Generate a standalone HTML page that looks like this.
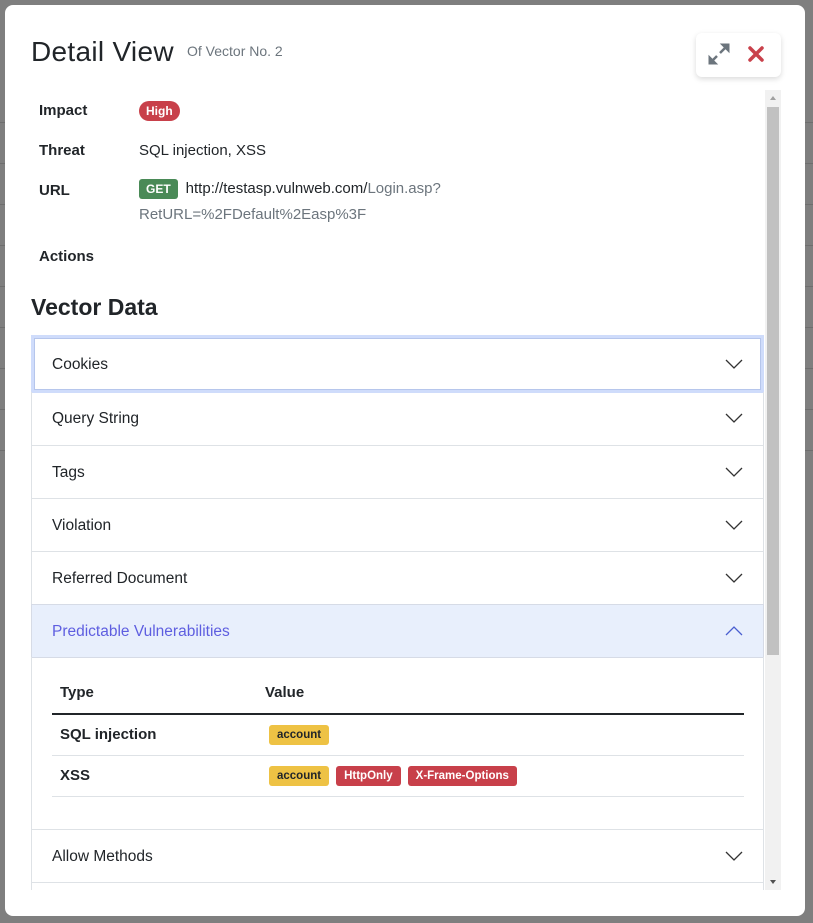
<!DOCTYPE html>
<html><head><meta charset="utf-8"><style>
*{box-sizing:border-box;margin:0;padding:0}
body{width:813px;height:923px;background:#7f7f7f;font-family:"Liberation Sans",sans-serif;position:relative;overflow:hidden;color:#212529}
.bgl{position:absolute;left:0;width:813px;height:1px;background:#6e6e6e}
.modal{position:absolute;left:5px;top:5px;width:800px;height:911px;background:#fff;border-radius:8px}
.title{position:absolute;left:26px;top:31px;font-size:28px;color:#212529;letter-spacing:0.3px}
.sub{position:absolute;left:182px;top:38px;font-size:14px;color:#6c757d}
.btns{position:absolute;left:691px;top:28px;width:85px;height:44px;background:#fff;border-radius:6px;box-shadow:0 2px 6px rgba(0,0,0,.15)}
.scroll{position:absolute;left:26px;top:85px;width:750px;height:800px;overflow:hidden}
.sb{position:absolute;left:734px;top:0;width:16px;height:800px;background:#f1f1f1}
.thumb{position:absolute;left:2px;top:17px;width:12px;height:548px;background:#c1c1c1}
.lbl{position:absolute;left:8px;font-weight:bold;font-size:15px}
.val{position:absolute;left:108px;font-size:15px}
.badge{display:inline-block;color:#fff;font-weight:bold;font-size:12px;padding:3px 7px;border-radius:10px;line-height:14px;vertical-align:middle}
.acc{position:absolute;left:0;width:733px;border:1px solid #dee2e6;font-size:15.5px;color:#212529}
.acc .t{position:absolute;left:20px;top:18px}
.chev{position:absolute;right:20px;top:21px}
.tag{display:inline-block;font-weight:bold;font-size:11.5px;padding:3px 8px;line-height:14px;border-radius:3px;margin-right:7px}
</style></head><body>
<div class="bgl" style="top:122px"></div><div class="bgl" style="top:163px"></div><div class="bgl" style="top:204px"></div><div class="bgl" style="top:245px"></div><div class="bgl" style="top:286px"></div><div class="bgl" style="top:327px"></div><div class="bgl" style="top:368px"></div><div class="bgl" style="top:409px"></div><div class="bgl" style="top:450px"></div>
<div class="modal">
<div class="title">Detail View</div>
<div class="sub">Of Vector No. 2</div>
<div class="btns">
<svg width="85" height="44" viewBox="0 0 85 44"><g stroke="#6c757d" stroke-width="2.5" fill="#6c757d"><line x1="16" y1="28" x2="21" y2="23"/><line x1="24" y1="20" x2="29" y2="15"/><path d="M25 11h8v8z" stroke-width="1"/><path d="M13 23v8h8z" stroke-width="1"/></g><g stroke="#c9414b" stroke-width="3.5" stroke-linecap="round"><line x1="54" y1="15" x2="66" y2="27"/><line x1="66" y1="15" x2="54" y2="27"/></g></svg>
</div>
<div class="scroll">
<div class="sb"><div class="thumb"></div><div style="position:absolute;left:5px;top:6px;border:3px solid transparent;border-bottom:4px solid #a0a0a0;border-top:0"></div><div style="position:absolute;left:5px;top:790px;border:3px solid transparent;border-top:4px solid #505050;border-bottom:0"></div></div>
<div class="lbl" style="top:12px">Impact</div><div class="val" style="top:11px"><span class="badge" style="background:#c8404a">High</span></div>
<div class="lbl" style="top:52px">Threat</div><div class="val" style="top:52px">SQL injection, XSS</div>
<div class="lbl" style="top:92px">URL</div><div class="val" style="top:86px;line-height:26px;color:#6c757d;width:400px"><span class="badge" style="background:#4a8a57;border-radius:3px;margin-right:8px">GET</span><span style="color:#212529">http://testasp.vulnweb.com/</span>Login.asp?<br>RetURL=%2FDefault%2Easp%3F</div>
<div class="lbl" style="top:158px">Actions</div>
<div style="position:absolute;left:0;top:204px;font-size:23px;font-weight:bold">Vector Data</div>
<div class="acc" style="top:245px;height:58px;border:3px solid #cfdcfb;background:#fff;box-shadow:inset 0 0 0 1px #b6c6ec"><span class="t" style="top:18px;left:18px">Cookies</span><svg class="chev" style="top:21px;right:18px" width="18" height="10"><path d="M1 1l8 8 8-8" fill="none" stroke="#333" stroke-width="1.3"/></svg></div>
<div class="acc" style="top:302px;height:54px;border-top:0"><span class="t">Query String</span><svg class="chev" width="18" height="10"><path d="M1 1l8 8 8-8" fill="none" stroke="#333" stroke-width="1.3"/></svg></div>
<div class="acc" style="top:355px;height:54px"><span class="t">Tags</span><svg class="chev" width="18" height="10"><path d="M1 1l8 8 8-8" fill="none" stroke="#333" stroke-width="1.3"/></svg></div>
<div class="acc" style="top:408px;height:54px"><span class="t">Violation</span><svg class="chev" width="18" height="10"><path d="M1 1l8 8 8-8" fill="none" stroke="#333" stroke-width="1.3"/></svg></div>
<div class="acc" style="top:461px;height:54px"><span class="t">Referred Document</span><svg class="chev" width="18" height="10"><path d="M1 1l8 8 8-8" fill="none" stroke="#333" stroke-width="1.3"/></svg></div>
<div class="acc" style="top:514px;height:54px;background:#e8effc;border-color:#d6dbe6;color:#5e5ee0"><span class="t">Predictable Vulnerabilities</span><svg class="chev" width="18" height="10"><path d="M1 9l8-8 8 8" fill="none" stroke="#4a5fd0" stroke-width="1.3"/></svg></div>
<div class="acc" style="top:567px;height:173px;border-top:0">
<div style="position:absolute;left:28px;top:27px;font-weight:bold;font-size:15px">Type</div>
<div style="position:absolute;left:233px;top:27px;font-weight:bold;font-size:15px">Value</div>
<div style="position:absolute;left:20px;top:56px;width:692px;height:2px;background:#212529"></div>
<div style="position:absolute;left:28px;top:69px;font-weight:bold;font-size:15px">SQL injection</div>
<div style="position:absolute;left:237px;top:68px"><span class="tag" style="background:#eec244">account</span></div>
<div style="position:absolute;left:20px;top:98px;width:692px;height:1px;background:#dee2e6"></div>
<div style="position:absolute;left:28px;top:110px;font-weight:bold;font-size:15px">XSS</div>
<div style="position:absolute;left:237px;top:109px"><span class="tag" style="background:#eec244">account</span><span class="tag" style="background:#c8404a;color:#fff">HttpOnly</span><span class="tag" style="background:#c8404a;color:#fff">X-Frame-Options</span></div>
<div style="position:absolute;left:20px;top:139px;width:692px;height:1px;background:#dee2e6"></div>
</div>
<div class="acc" style="top:739px;height:54px"><span class="t">Allow Methods</span><svg class="chev" width="18" height="10"><path d="M1 1l8 8 8-8" fill="none" stroke="#333" stroke-width="1.3"/></svg></div>
<div class="acc" style="top:792px;height:54px"></div>
</div>
</div>
</body></html>
